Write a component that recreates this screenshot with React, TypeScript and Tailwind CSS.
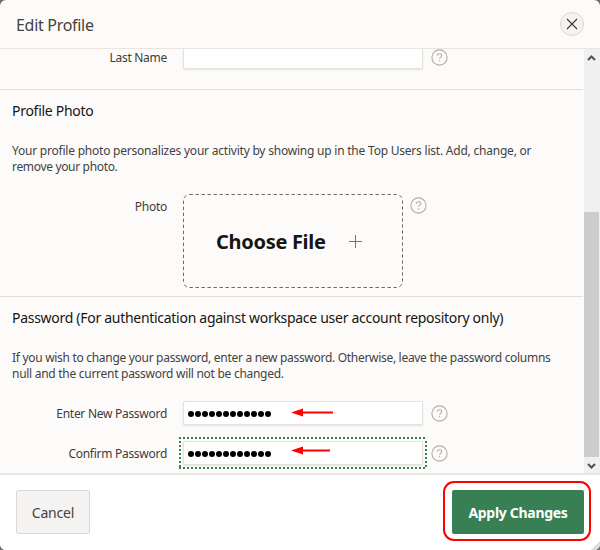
import type { ReactNode } from "react";

function Help({ className = "" }: { className?: string }) {
  return (
    <svg width="17" height="17" viewBox="0 0 17 17" fill="none" className={`shrink-0 ${className}`}>
      <circle cx="8.5" cy="8.5" r="7.6" stroke="#b0aeac" strokeWidth="1.1" />
      <path d="M6.3 6.7C6.3 5.4 7.2 4.7 8.5 4.7S10.8 5.5 10.8 6.6C10.8 8.1 8.6 8.1 8.6 9.8" stroke="#b0aeac" strokeWidth="1.1" />
      <path d="M8.6 11.2V12.4" stroke="#b0aeac" strokeWidth="1.2" />
    </svg>
  );
}

function Label({ children, className = "" }: { children: ReactNode; className?: string }) {
  return <div className={`w-[167px] shrink-0 text-right text-[12px] leading-4 tracking-[-0.28px] text-[#3f3c39] ${className}`}>{children}</div>;
}

function Arrow({ length, className }: { length: number; className: string }) {
  return (
    <svg width="44" height="9" viewBox="0 0 44 9" className={`absolute ${className}`}>
      <path d={`M10 4.5H${length}`} stroke="#fe0000" strokeWidth="2" />
      <path d="M0 4.5L12 0.5V8.5Z" fill="#fe0000" />
    </svg>
  );
}

function Dots() {
  return (
    <div className="flex gap-[1px] pt-[2px] pl-[4px]">
      {Array.from({ length: 12 }, (_, i) => (
        <span key={i} className="h-[6px] w-[6px] rounded-full bg-black" />
      ))}
    </div>
  );
}

const inputBox =
  "relative ml-[16px] flex h-6 w-[240px] shrink-0 items-center rounded-[2px] border border-[#e4e2df] bg-white shadow-[0_1px_2px_rgba(0,0,0,0.1)]";

export default function App() {
  return (
    <div className="h-[550px] w-[600px] overflow-hidden bg-[#6f6e6d] font-['Noto_Sans','Open_Sans',sans-serif]">
      <div className="relative flex h-[550px] flex-col overflow-hidden rounded-[6px] bg-[#fcfbfa]">
        <header className="flex h-[49px] shrink-0 items-center justify-between border-b border-[#e9e6e2] pr-4 pl-4">
          <h1 className="pt-px text-[16px] leading-6 tracking-[-0.3px] text-[#45413e]">Edit Profile</h1>
          <button className="flex h-6 w-6 items-center justify-center rounded-full border border-[#d8d6d3] bg-[#f5f4f2]">
            <svg width="12" height="12" viewBox="0 0 12 12" className="shrink-0">
              <path d="M1 1L11 11M11 1L1 11" stroke="#3b3836" strokeWidth="1.1" />
            </svg>
          </button>
        </header>

        <div className="flex h-[424px] shrink-0">
          <main className="w-[583px] shrink-0 overflow-hidden">
            <section className="flex h-[41px] items-start border-b border-[#e2e0dd]">
              <Label className="mt-[1px]">Last Name</Label>
              <div className="ml-[16px] h-5 w-[240px] shrink-0 rounded-b-[2px] border border-t-0 border-[#e4e2df] bg-white shadow-[0_1px_2px_rgba(0,0,0,0.1)]" />
              <Help className="ml-[8px]" />
            </section>

            <section className="h-[207px] border-b border-[#e2e0dd] pt-[11px]">
              <h2 className="pl-3 text-[14px] leading-5 tracking-[-0.28px] text-[#161513]">Profile Photo</h2>
              <p className="mt-[22px] pl-3 text-[12px] leading-4 whitespace-nowrap text-[#45413e]">
                <span className="tracking-[-0.22px]">Your profile photo personalizes your activity by showing up in the Top Users list. Add, change, or</span>
                <br />
                <span className="tracking-[-0.33px]">remove your photo.</span>
              </p>
              <div className="mt-[19px] flex items-start">
                <Label className="mt-[5px]">Photo</Label>
                <div className="ml-[16px] flex h-[95px] w-[220px] shrink-0">
                  <div className="relative flex h-[94px] w-full items-center pl-[33px]">
                    <svg width="220" height="94" viewBox="0 0 220 94" fill="none" className="absolute top-0 left-0">
                      <rect x="0.5" y="0.5" width="219" height="93" rx="6" stroke="#6d6a67" strokeDasharray="3.4 2.6" />
                    </svg>
                    <span className="pt-px text-[20px] leading-7 font-bold tracking-[-0.3px] whitespace-nowrap text-[#161513]">Choose File</span>
                    <svg width="13" height="13" viewBox="0 0 13 13" className="absolute left-[166px]">
                      <path d="M6.5 0V13M0 6.5H13" stroke="#777572" />
                    </svg>
                  </div>
                </div>
                <Help className="mt-[3px] ml-[7px]" />
              </div>
            </section>

            <section className="pt-[11px]">
              <h2 className="pl-3 text-[14px] leading-5 tracking-[-0.29px] whitespace-nowrap text-[#161513]">
                Password (For authentication against workspace user account repository only)
              </h2>
              <p className="mt-[22px] pl-3 text-[12px] leading-4 whitespace-nowrap text-[#45413e]">
                <span className="tracking-[-0.3px]">If you wish to change your password, enter a new password. Otherwise, leave the password columns</span>
                <br />
                <span className="tracking-[-0.28px]">null and the current password will not be changed.</span>
              </p>
              <div className="mt-[19px] flex h-[25px] items-start">
                <Label className="mt-[5px]">Enter New Password</Label>
                <div className={inputBox}>
                  <Dots />
                  <Arrow length={42} className="top-[6px] left-[107px]" />
                </div>
                <Help className="mt-[4px] ml-[8px]" />
              </div>
              <div className="mt-[15px] flex h-[25px] items-start">
                <Label className="mt-[5px]">Confirm Password</Label>
                <div className={inputBox}>
                  <Dots />
                  <Arrow length={39} className="top-[4px] left-[107px]" />
                  <svg width="248" height="32" viewBox="0 0 248 32" fill="none" className="absolute -top-[5px] -left-[5px]">
                    <path d="M0 1H248M0 31H248" stroke="#387f54" strokeWidth="2" strokeDasharray="2 2" />
                    <path d="M1 4V30M247 4V30" stroke="#387f54" strokeWidth="2" strokeDasharray="2 2" />
                  </svg>
                </div>
                <Help className="mt-[4px] ml-[8px]" />
              </div>
            </section>
          </main>
          <div className="ml-px flex w-4 flex-col bg-[#f0f0f0]">
            <svg width="15" height="18" viewBox="0 0 15 18" className="shrink-0" fill="none">
              <path d="M4 11L7.5 7.5L11 11" stroke="#505050" strokeWidth="2" />
            </svg>
            <div className="mt-[145px] h-[245px] w-[15px] shrink-0 bg-[#cdcdcd]" />
            <svg width="15" height="16" viewBox="0 0 15 16" className="shrink-0" fill="none">
              <path d="M4 7L7.5 10.5L11 7" stroke="#505050" strokeWidth="2" />
            </svg>
          </div>
        </div>

        <footer className="flex flex-1 items-start justify-between border-t-2 border-[#e8e6e4] bg-white px-4 pt-[15px]">
          <button className="h-11 w-[74px] rounded-[2px] border border-[#dbd9d6] bg-[#f5f4f2] pt-px text-[14px] leading-5 tracking-[-0.2px] text-[#45413e]">Cancel</button>
          <div className="relative">
            <button className="h-11 w-[132px] rounded-[2px] bg-[#387f54] pt-px text-[14px] leading-5 font-bold tracking-[-0.3px] whitespace-nowrap text-white">Apply Changes</button>
            <div className="absolute -top-[9px] -left-[9px] h-[60px] w-[148px] rounded-[11px] border-2 border-[#fe0000]" />
          </div>
        </footer>
        <svg width="10" height="10" viewBox="0 0 10 10" className="absolute right-0 bottom-0">
          <path d="M10 1V10H1Z" fill="#dcdcdc" />
        </svg>
      </div>
    </div>
  );
}
